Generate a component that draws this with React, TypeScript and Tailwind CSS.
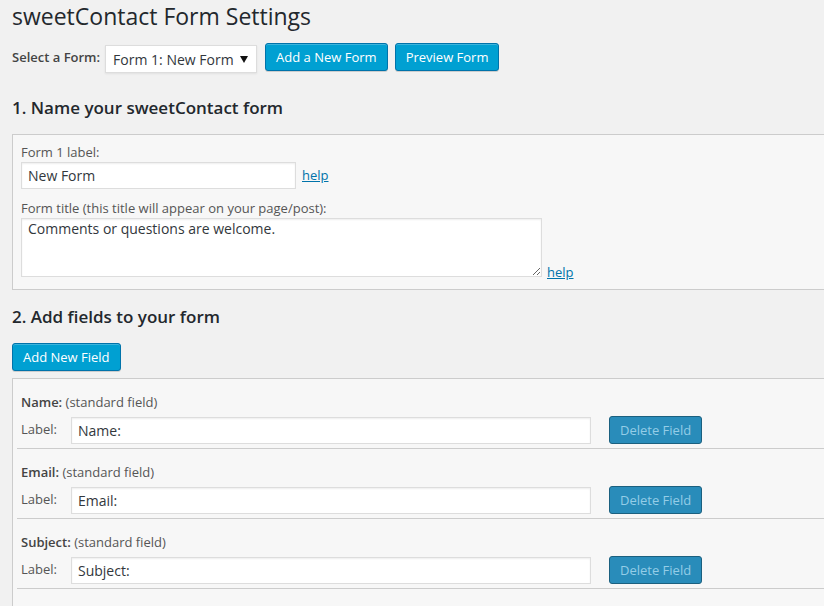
const btnPrimary =
  'h-[28px] rounded-[3px] border border-[#0073aa] bg-[#00a0d2] px-[10px] text-[13px] leading-[26px] text-white shadow-[inset_0_1px_0_rgba(120,200,230,0.5),0_1px_0_rgba(0,0,0,0.15)] whitespace-nowrap';

const inputCls =
  'h-[27px] border border-[#ddd] bg-white px-[6px] text-[14px] text-[#32373c] shadow-[inset_0_1px_2px_rgba(0,0,0,0.07)] outline-none';

const fields = [
  { name: 'Name:', value: 'Name:' },
  { name: 'Email:', value: 'Email:' },
  { name: 'Subject:', value: 'Subject:' },
];

function FieldRow({ name, value }: { name: string; value: string }) {
  return (
    <div className="border-b border-[#ccc] pt-[14px] pb-[4px]">
      <div className="pl-[4px] leading-[18px]">
        <span className="font-semibold text-[#444]">{name}</span>{' '}
        <span className="text-[#555]">(standard field)</span>
      </div>
      <div className="mt-[5px] flex items-center pl-[4px]">
        <span className="w-[50px] text-[#555]">Label:</span>
        <input className={`${inputCls} w-[520px]`} defaultValue={value} readOnly />
        <button
          className="ml-[18px] h-[28px] rounded-[3px] border border-[#1b607f] bg-[#298cba] px-[10px] text-[13px] leading-[26px] text-[#94cde7] whitespace-nowrap"
          disabled
        >
          Delete Field
        </button>
      </div>
    </div>
  );
}

export default function App() {
  return (
    <div className="h-[606px] w-[824px] overflow-hidden bg-[#f1f1f1] pl-[12px] font-['Open_Sans',sans-serif] text-[13px] text-[#444]">
      <h1 className="pt-[2px] text-[23px] leading-[29px] font-normal text-[#23282d]">
        sweetContact Form Settings
      </h1>

      <div className="mt-[12px] flex items-start">
        <span className="font-semibold leading-[28px] text-[#444]">Select a Form:</span>
        <div className="ml-[5px] mt-[2px] flex h-[28px] w-[152px] items-center justify-between border border-[#ddd] bg-white pl-[7px] pr-[8px] text-[14px] text-[#32373c] shadow-[0_1px_2px_rgba(0,0,0,0.07)]">
          <span>Form 1: New Form</span>
          <svg width="8" height="7" viewBox="0 0 8 7">
            <path d="M0 0 L8 0 L4 7 Z" fill="#111" />
          </svg>
        </div>
        <button className={`${btnPrimary} ml-[8px]`}>Add a New Form</button>
        <button className={`${btnPrimary} ml-[7px]`}>Preview Form</button>
      </div>

      <h2 className="mt-[24px] text-[17px] leading-[22px] font-semibold text-[#23282d]">
        1. Name your sweetContact form
      </h2>

      <div className="mt-[15px] w-[830px] border border-[#ccc] bg-[#f7f7f7] px-[8px] pt-[8px] pb-[12px]">
        <div className="leading-[18px] text-[#555]">Form 1 label:</div>
        <div className="mt-px flex items-center">
          <input className={`${inputCls} w-[275px]`} defaultValue="New Form" readOnly />
          <a href="#" className="ml-[6px] text-[#0073aa] underline">
            help
          </a>
        </div>
        <div className="mt-[10px] leading-[18px] text-[#555]">
          Form title (this title will appear on your page/post):
        </div>
        <div className="mt-px flex items-end">
          <textarea
            className="h-[59px] w-[521px] border border-[#ddd] bg-white px-[6px] pt-px text-[14px] leading-[18px] text-[#32373c] shadow-[inset_0_1px_2px_rgba(0,0,0,0.07)] outline-none"
            defaultValue="Comments or questions are welcome."
            readOnly
          />
          <a href="#" className="ml-[5px] leading-[10px] text-[#0073aa] underline">
            help
          </a>
        </div>
      </div>

      <h2 className="mt-[16px] text-[17px] leading-[22px] font-semibold text-[#23282d]">
        2. Add fields to your form
      </h2>

      <button className={`${btnPrimary} mt-[15px]`}>Add New Field</button>

      <div className="mt-[7px] w-[830px] border border-[#ccc] bg-[#f7f7f7] pl-[4px] pb-[40px]">
        {fields.map((f) => (
          <FieldRow key={f.name} name={f.name} value={f.value} />
        ))}
      </div>
    </div>
  );
}
